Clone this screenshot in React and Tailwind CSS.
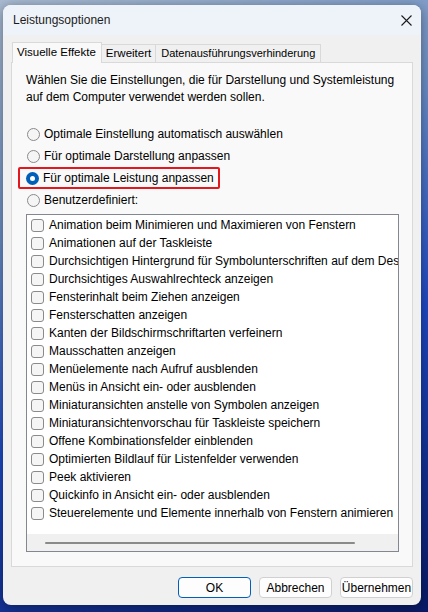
import { useState } from "react";

const effects = [
  "Animation beim Minimieren und Maximieren von Fenstern",
  "Animationen auf der Taskleiste",
  "Durchsichtigen Hintergrund für Symbolunterschriften auf dem Desktop verwenden",
  "Durchsichtiges Auswahlrechteck anzeigen",
  "Fensterinhalt beim Ziehen anzeigen",
  "Fensterschatten anzeigen",
  "Kanten der Bildschirmschriftarten verfeinern",
  "Mausschatten anzeigen",
  "Menüelemente nach Aufruf ausblenden",
  "Menüs in Ansicht ein- oder ausblenden",
  "Miniaturansichten anstelle von Symbolen anzeigen",
  "Miniaturansichtenvorschau für Taskleiste speichern",
  "Offene Kombinationsfelder einblenden",
  "Optimierten Bildlauf für Listenfelder verwenden",
  "Peek aktivieren",
  "Quickinfo in Ansicht ein- oder ausblenden",
  "Steuerelemente und Elemente innerhalb von Fenstern animieren",
];

const options = [
  "Optimale Einstellung automatisch auswählen",
  "Für optimale Darstellung anpassen",
  "Für optimale Leistung anpassen",
  "Benutzerdefiniert:",
];

function Radio({ checked }) {
  if (checked) {
    return (
      <span className="h-[13px] w-[13px] shrink-0 rounded-full bg-[#005fb8] grid place-items-center">
        <span className="h-[5px] w-[5px] rounded-full bg-white" />
      </span>
    );
  }
  return <span className="h-[13px] w-[13px] shrink-0 rounded-full border border-[#8a8a8a] bg-[#f5f5f5]" />;
}

function Btn({ label, primary }) {
  return (
    <button
      className={
        "h-[21px] w-[73px] rounded-[4px] border bg-[#fdfdfd] text-[12px] text-black leading-none " +
        (primary ? "border-[#005fb8]" : "border-[#d0d0d0]")
      }
    >
      {label}
    </button>
  );
}

export default function App() {
  const [sel] = useState(2);

  return (
    <div className="w-[428px] h-[612px] overflow-hidden bg-[linear-gradient(160deg,#a9bbd1_0%,#6d8fc4_30%,#1d49c2_60%,#0a1a66_100%)] pt-[5px] pl-[3px] font-['Liberation_Sans',Arial,sans-serif] text-[12px] text-black">
      <div className="w-[418px] h-[600px] rounded-[8px] overflow-hidden bg-[#f0f0f0] shadow-[0_2px_12px_rgba(0,0,0,0.4)] flex flex-col">
        {/* title bar */}
        <div className="h-[30px] shrink-0 bg-[#eef3f9] flex items-center pl-[10px] pr-[9px]">
          <span className="text-[12px] text-[#1b1b1b]">Leistungsoptionen</span>
          <svg className="ml-auto h-[11px] w-[11px]" viewBox="0 0 11 11" fill="none" stroke="#1b1b1b" strokeWidth="1.1">
            <path d="M0.5 0.5 L10.5 10.5 M10.5 0.5 L0.5 10.5" />
          </svg>
        </div>

        <div className="px-[8px] pt-[7px] flex flex-col">
          {/* tabs */}
          <div className="flex items-end h-[20px] pl-[1px] text-[11.5px]">
            <div className="h-[21px] -mb-[1px] pl-[4px] pr-[5px] border border-b-0 border-[#d9d9d9] bg-[#f9f9f9] flex items-center relative z-10">
              Visuelle Effekte
            </div>
            <div className="h-[18px] px-[4px] border border-l-0 border-b-0 border-[#d9d9d9] bg-[#f0f0f0] flex items-center">
              Erweitert
            </div>
            <div className="h-[18px] px-[5px] border border-l-0 border-b-0 border-[#d9d9d9] bg-[#f0f0f0] flex items-center text-[11px]">
              Datenausführungsverhinderung
            </div>
          </div>

          {/* panel */}
          <div className="h-[505px] border border-[#d9d9d9] bg-[#f9f9f9] pl-[14px] pr-[13px] pt-[9px] flex flex-col">
            <p className="leading-[17px] text-[#000]">
              Wählen Sie die Einstellungen, die für Darstellung und Systemleistung
              <br />
              auf dem Computer verwendet werden sollen.
            </p>

            <div className="mt-[17px] flex flex-col">
              {options.map((o, i) =>
                i === sel ? (
                  <div
                    key={o}
                    className="h-[22px] -ml-[8px] pl-[6px] pr-[4px] w-fit flex items-center gap-[4px] border-2 border-[#e3181f] rounded-[2px]"
                  >
                    <Radio checked />
                    <span>{o}</span>
                  </div>
                ) : (
                  <div key={o} className="h-[22px] flex items-center gap-[4px] pl-[1px]">
                    <Radio />
                    <span>{o}</span>
                  </div>
                )
              )}
            </div>

            {/* list box */}
            <div className="mt-[3px] h-[338px] border border-[#828790] bg-white flex flex-col overflow-hidden">
              <div className="pt-[1px] flex-1">
                {effects.map((e) => (
                  <div key={e} className="h-[18px] flex items-center pl-[4px] gap-[5px] whitespace-nowrap">
                    <span className="h-[13px] w-[13px] shrink-0 rounded-[3px] border border-[#8a8a8a] bg-[#f5f5f5]" />
                    <span>{e}</span>
                  </div>
                ))}
              </div>
              <div className="h-[17px] shrink-0 bg-[#f0f0f0] flex items-center pl-[18px]">
                <div className="h-[2px] w-[310px] rounded-full bg-[#8a8a8a]" />
              </div>
            </div>
          </div>

          {/* buttons */}
          <div className="mt-[10px] flex justify-end gap-[8px]">
            <Btn label="OK" primary />
            <Btn label="Abbrechen" />
            <Btn label="Übernehmen" />
          </div>
        </div>
      </div>
    </div>
  );
}
